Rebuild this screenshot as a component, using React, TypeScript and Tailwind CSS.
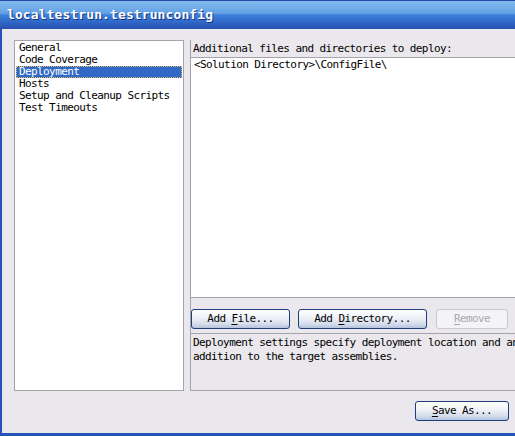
import React from 'react';

const mono = "font-['DejaVu_Sans_Mono','Liberation_Mono',monospace]";

const items = ['General', 'Code Coverage', 'Deployment', 'Hosts', 'Setup and Cleanup Scripts', 'Test Timeouts'];

const XpButton = ({ children, className = '', disabled = false }: { children: React.ReactNode; className?: string; disabled?: boolean }) => (
  <button
    className={`h-[20px] shrink-0 rounded-[3px] border text-[11px] leading-[12px] tracking-[-0.6px] ${mono} ${
      disabled
        ? 'border-[#C9C8CE] bg-[#F4F3F6] text-[#A9A8AD]'
        : 'border-[#1D3E78] bg-[linear-gradient(#FFFFFF,#EEF1F7_45%,#D3DBEA_80%,#B4C2DC)] text-black'
    } ${className}`}
  >
    {children}
  </button>
);

export default function App() {
  return (
    <div className="w-[515px] h-[436px] overflow-hidden flex flex-col bg-[#EAE8EC]">
      {/* title bar */}
      <div className="h-[29px] shrink-0 flex items-center pl-[7px] border-t border-[#2747A8] bg-[linear-gradient(#80BBED,#63A1E6_44%,#3B80D9_50%,#3068C8_75%,#2850AE)]">
        <span className={`${mono} font-bold text-[13px] text-white tracking-[0.1px] [text-shadow:1px_1px_0_#16327E]`}>
          localtestrun.testrunconfig
        </span>
      </div>

      {/* window body */}
      <div className="flex-1 flex flex-col border-l-2 border-b-[3px] border-[#2552B8] pl-[12px] pt-[11px]">
        <div className="flex h-[351px] shrink-0">
          {/* category list */}
          <div className={`w-[170px] shrink-0 bg-white border border-[#A5A5A9] pt-[1px] px-[1px] ${mono} text-[11px] tracking-[-0.6px]`}>
            {items.map((it) =>
              it === 'Deployment' ? (
                <div key={it} className="h-[12px] leading-[10px] pl-[2px] bg-[#316AC5] text-white border border-dotted border-[#E6B36A]">
                  {it}
                </div>
              ) : (
                <div key={it} className="h-[12px] leading-[12px] pl-[3px] text-black">
                  {it}
                </div>
              )
            )}
          </div>

          {/* deployment page */}
          <div className="ml-[6px] w-[360px] shrink-0 flex flex-col border-l border-b border-[#A5A5A9]">
            <div className={`pt-[3px] pl-[2px] h-[15px] leading-[12px] ${mono} text-[11px] tracking-[-0.6px] text-black whitespace-nowrap`}>
              Additional files and directories to deploy:
            </div>
            <div className={`mt-[2px] h-[241px] bg-white border-t border-r border-b border-[#A5A5A9] pl-[3px] pt-[1px] ${mono} text-[11px] leading-[12px] tracking-[-0.6px] text-black whitespace-nowrap`}>
              &lt;Solution Directory&gt;\ConfigFile\
            </div>
            <div className="flex mt-[11px]">
              <XpButton className="w-[99px]">
                Add <span className="underline underline-offset-2">F</span>ile...
              </XpButton>
              <XpButton className="w-[129px] ml-[8px]">
                Add <span className="underline underline-offset-2">D</span>irectory...
              </XpButton>
              <XpButton className="w-[72px] ml-[9px]" disabled>
                <span className="underline underline-offset-2">R</span>emove
              </XpButton>
            </div>
            <div className={`mt-[4px] flex-1 border-t border-[#A5A5A9] pl-[2px] pt-[2px] ${mono} text-[11px] leading-[14px] tracking-[-0.6px] text-black whitespace-nowrap`}>
              <div>Deployment settings specify deployment location and any</div>
              <div>addition to the target assemblies.</div>
            </div>
          </div>
        </div>

        {/* footer */}
        <div className="flex justify-end pr-[6px] pt-[10px]">
          <XpButton className="w-[94px]">
            <span className="underline underline-offset-2">S</span>ave As...
          </XpButton>
        </div>
      </div>
    </div>
  );
}
